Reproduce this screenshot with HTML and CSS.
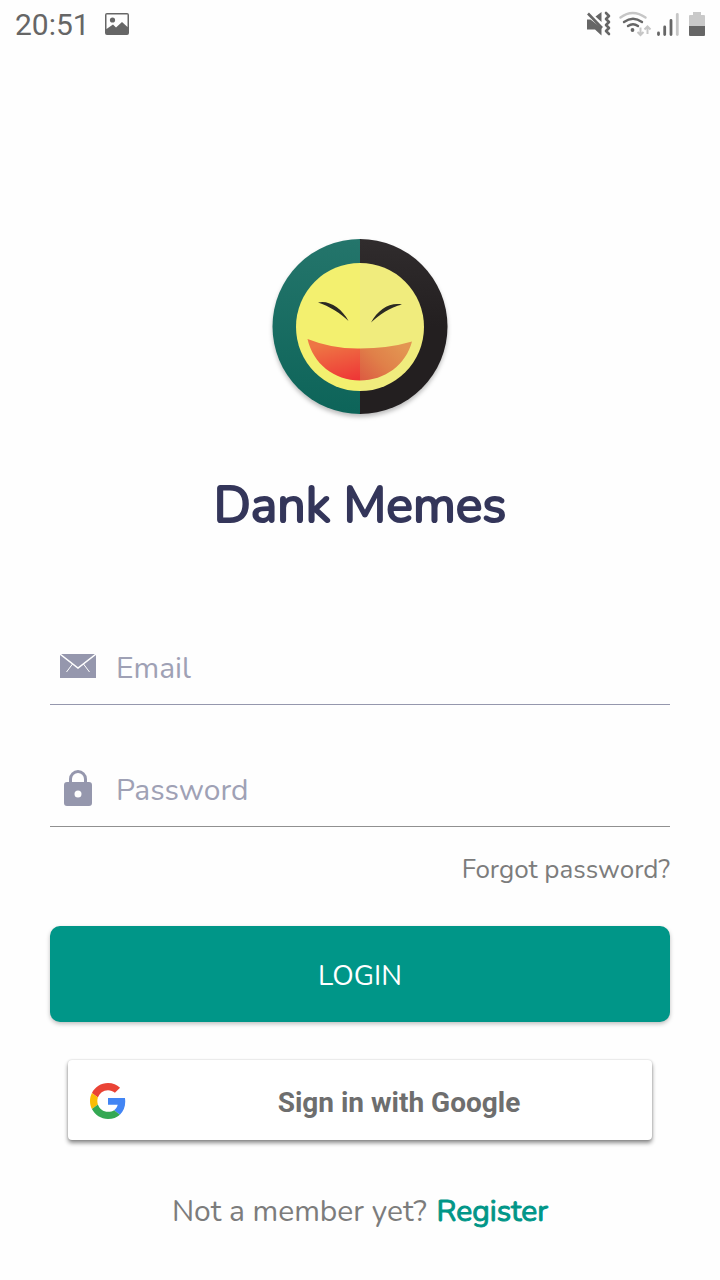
FILE: index.html
```html
<!DOCTYPE html>
<html lang="en">
<head>
<meta charset="utf-8">
<meta name="viewport" content="width=device-width, initial-scale=1">
<title>Dank Memes</title>
<link rel="stylesheet" href="styles.css">
</head>
<body>
<header class="status">
  <span class="clock">20:51</span>
  <svg class="picture" width="24" height="22" viewBox="0 0 24 22"><path fill="#666" fill-rule="evenodd" d="M2 0h20a2 2 0 0 1 2 2v18a2 2 0 0 1-2 2H2a2 2 0 0 1-2-2V2a2 2 0 0 1 2-2zM1.500 1.500V16L8 11.500l3 3L17 9l5.500 5V1.500z"/><circle cx="7.500" cy="7" r="2.600" fill="#666"/></svg>
  <svg class="indicators" width="120" height="26" viewBox="586 11 120 26">
    <g fill="#666"><path d="M587 19.500h3.500L601.500 28v7.500l-6.500-6h-8zM601.500 12v10l-6-5.500z"/></g>
    <path d="M588 13.500l14 14.500" stroke="#666" stroke-width="2.600"/>
    <path d="M606 13l3 3-3 3 3 3-3 3 3 3-3 3 3 3" fill="none" stroke="#666" stroke-width="2.600" stroke-linejoin="round" stroke-linecap="round"/>
    <g fill="none" stroke-width="2.400" stroke-linecap="round"><path stroke="#c6c6c6" d="M620.500 17.500q12-9 25 0"/><path stroke="#666" d="M624 22q9-6.500 18 0M628 26q5-3.500 10 0"/></g>
    <circle cx="632.500" cy="30" r="1.900" fill="#666"/>
    <path d="M640.500 27.500V35m-3-3l3 3 3-3M647.500 34v-7.500m-3 3l3-3 3 3" fill="none" stroke="#c6c6c6" stroke-width="2"/>
    <g stroke-width="2.800" stroke-linecap="round"><path stroke="#666" d="M658.500 33v1.500M664.700 27v7.500M671 20.500v14"/><path stroke="#c6c6c6" d="M677.300 14.500v20"/></g>
    <path fill="#c9c9c9" d="M693 12h8v3h3q1 0 1 1v10h-16V16q0-1 1-1h3z"/><path fill="#666" d="M689 26h16v9q0 1-1 1h-14q-1 0-1-1z"/>
  </svg>
</header>
<main class="login">
  <svg class="logo" width="200" height="200" viewBox="0 0 200 200" role="img" aria-label="Dank Memes logo">
    <defs>
      <linearGradient id="teal" x1="0" y1="0" x2="0" y2="1"><stop offset="0" stop-color="#24756b"/><stop offset="1" stop-color="#0d6459"/></linearGradient>
      <linearGradient id="dark" x1="0" y1="0" x2="0" y2="1"><stop offset="0" stop-color="#302c2d"/><stop offset=".5" stop-color="#231f20"/></linearGradient>
      <linearGradient id="red" gradientUnits="userSpaceOnUse" x1="78" y1="116" x2="88" y2="158"><stop offset="0" stop-color="#ee7644"/><stop offset="1" stop-color="#ee3436"/></linearGradient>
      <linearGradient id="tan" gradientUnits="userSpaceOnUse" x1="140" y1="118" x2="102" y2="156"><stop offset="0" stop-color="#e39652"/><stop offset=".5" stop-color="#e08049"/><stop offset="1" stop-color="#dc5b42"/></linearGradient>
    </defs>
    <path fill="url(#teal)" d="M100 14a87.500 87.500 0 0 0 0 175z"/>
    <path fill="url(#dark)" d="M100 14a87.500 87.500 0 0 1 0 175z"/>
    <path fill="#f3f06f" d="M100 38a64 64 0 0 0 0 128z"/>
    <path fill="#f0ec7d" d="M100 38a64 64 0 0 1 0 128z"/>
    <path fill="#2b2a22" d="M58 77.500c10-3 24 5.500 30.500 18.500C81 88.500 69 81 58 77.500zM142 79.500c-12-2.500-24 5-31 18C119 90 130 82.500 142 79.500z"/>
    <path fill="url(#red)" d="M47.500 114q25 10 52.500 9.500v32c-26 0-47-17-52.500-41.500z"/>
    <path fill="url(#tan)" d="M100 123.500q28 0 52-7c-6 23-27 39-52 39z"/>
  </svg>
  <h1 class="title">Dank Memes</h1>
  <form class="form">
    <label class="field">
      <svg class="field-icon" width="36" height="36" viewBox="0 0 36 36" aria-hidden="true"><path fill="#9597ad" d="M0 6h36v24H0z"/><path fill="none" stroke="#fff" stroke-width="1.500" d="M0 6l18 14L36 6"/><path fill="none" stroke="#fff" d="M12.500 16L6.500 24M23.500 16l6 8"/></svg>
      <input class="input" type="email" placeholder="Email" aria-label="Email">
    </label>
    <label class="field field-password">
      <svg class="field-icon" width="36" height="36" viewBox="0 0 36 36" aria-hidden="true"><path fill="none" stroke="#9597ad" stroke-width="3" d="M10.500 14V9a7.500 7.500 0 0 1 15 0v5"/><path fill="#9597ad" fill-rule="evenodd" d="M7 12h22a3 3 0 0 1 3 3v18a3 3 0 0 1-3 3H7a3 3 0 0 1-3-3V15a3 3 0 0 1 3-3zM18 20.500a3.500 3.500 0 1 0 0 7a3.500 3.500 0 0 0 0-7z"/></svg>
      <input class="input" type="password" placeholder="Password" aria-label="Password">
    </label>
    <a class="forgot" href="#">Forgot password?</a>
    <button class="submit" type="submit">LOGIN</button>
    <button class="google" type="button">
      <svg class="google-logo" width="36" height="36" viewBox="0 0 48 48" aria-hidden="true"><path fill="#EA4335" d="M24 9.500c3.540 0 6.710 1.220 9.210 3.600l6.850-6.850C35.900 2.380 30.470 0 24 0 14.620 0 6.510 5.380 2.560 13.220l7.980 6.190C12.430 13.720 17.740 9.500 24 9.500z"/><path fill="#4285F4" d="M46.980 24.550c0-1.570-.15-3.090-.38-4.550H24v9.020h12.940c-.58 2.960-2.260 5.480-4.780 7.180l7.730 6c4.510-4.180 7.090-10.360 7.090-17.650z"/><path fill="#FBBC05" d="M10.530 28.590c-.48-1.450-.76-2.990-.76-4.590s.27-3.140.76-4.590l-7.980-6.190C.92 16.460 0 20.120 0 24s.92 7.540 2.560 10.780l7.970-6.190z"/><path fill="#34A853" d="M24 48c6.480 0 11.930-2.130 15.890-5.810l-7.730-6c-2.150 1.450-4.920 2.300-8.160 2.300-6.260 0-11.570-4.220-13.470-9.910l-7.980 6.190C6.510 42.620 14.620 48 24 48z"/></svg>
      <span class="google-text">Sign in with Google</span>
    </button>
  </form>
  <p class="join">Not a member yet? <a class="register" href="#">Register</a></p>
</main>
</body>
</html>
```
FILE: styles.css
```css
* { box-sizing: border-box; }
body {
  margin: 0;
  background: #fefefe;
  color: #7c7c7c;
  font-family: Nunito, "Open Sans", "Noto Sans", sans-serif;
}
.status {
  display: flex;
  align-items: center;
  height: 48px;
  padding: 0 14px 0 15px;
}
.clock {
  padding-top: 2px;
  color: #666;
  font: 400 30px/48px Roboto, sans-serif;
}
.picture { margin-left: 15px; }
.indicators { margin-left: auto; }
.login {
  display: flex;
  flex-direction: column;
  align-items: center;
  padding: 177px 50px 40px;
}
.logo {
  display: block;
  filter: drop-shadow(0 3px 2px rgb(0 0 0 / 25%));
}
.title {
  margin: 46px 0 0;
  color: #34365a;
  font: 400 50px/70px Nunito, Lato, sans-serif;
  -webkit-text-stroke: 2px #34365a;
}
.form {
  display: flex;
  flex-direction: column;
  width: 100%;
  margin-top: 90px;
}
.field {
  display: flex;
  align-items: center;
  gap: 20px;
  height: 74px;
  padding: 0 10px;
  border-bottom: 1px solid #9597ad;
}
.field-password {
  margin-top: 48px;
  border-color: #909090;
}
.field-icon {
  flex: none;
  margin-bottom: 4px;
}
.input {
  flex: 1;
  min-width: 0;
  height: 60px;
  padding: 2px 0 0;
  border: 0;
  outline: 0;
  background: none;
  color: #34365a;
  font: 400 30px/40px Nunito, "Open Sans", sans-serif;
}
.input::placeholder { color: #9fa1b5; opacity: 1; }
.forgot {
  align-self: flex-end;
  margin-top: 25px;
  color: #7c7c7c;
  font-size: 26px;
  font-weight: 400;
  line-height: 36px;
  text-decoration: none;
}
.submit {
  height: 96px;
  margin-top: 38px;
  padding: 4px 0 0;
  border: 0;
  border-radius: 10px;
  background: #009688;
  box-shadow: 0 2px 4px rgb(0 0 0 / 25%);
  color: #fff;
  font: 400 28px/40px Nunito, Lato, sans-serif;
}
.google {
  display: flex;
  align-items: center;
  height: 80px;
  margin: 38px 18px 0;
  padding: 2px 16px 0 22px;
  border: 0;
  border-radius: 4px;
  background: #fff;
  box-shadow: 0 3px 4px rgb(0 0 0 / 45%), 0 0 2px rgb(0 0 0 / 20%);
  color: #6e6e6e;
}
.google-text {
  flex: 1;
  padding: 4px 0 0 36px;
  font: 700 28px/36px Roboto, sans-serif;
  text-align: center;
}
.join {
  margin: 52px 0 0;
  font-size: 30px;
  font-weight: 400;
  line-height: 40px;
}
.register {
  margin-left: 2px;
  color: #009688;
  text-decoration: none;
  -webkit-text-stroke: 1px #009688;
}
```
